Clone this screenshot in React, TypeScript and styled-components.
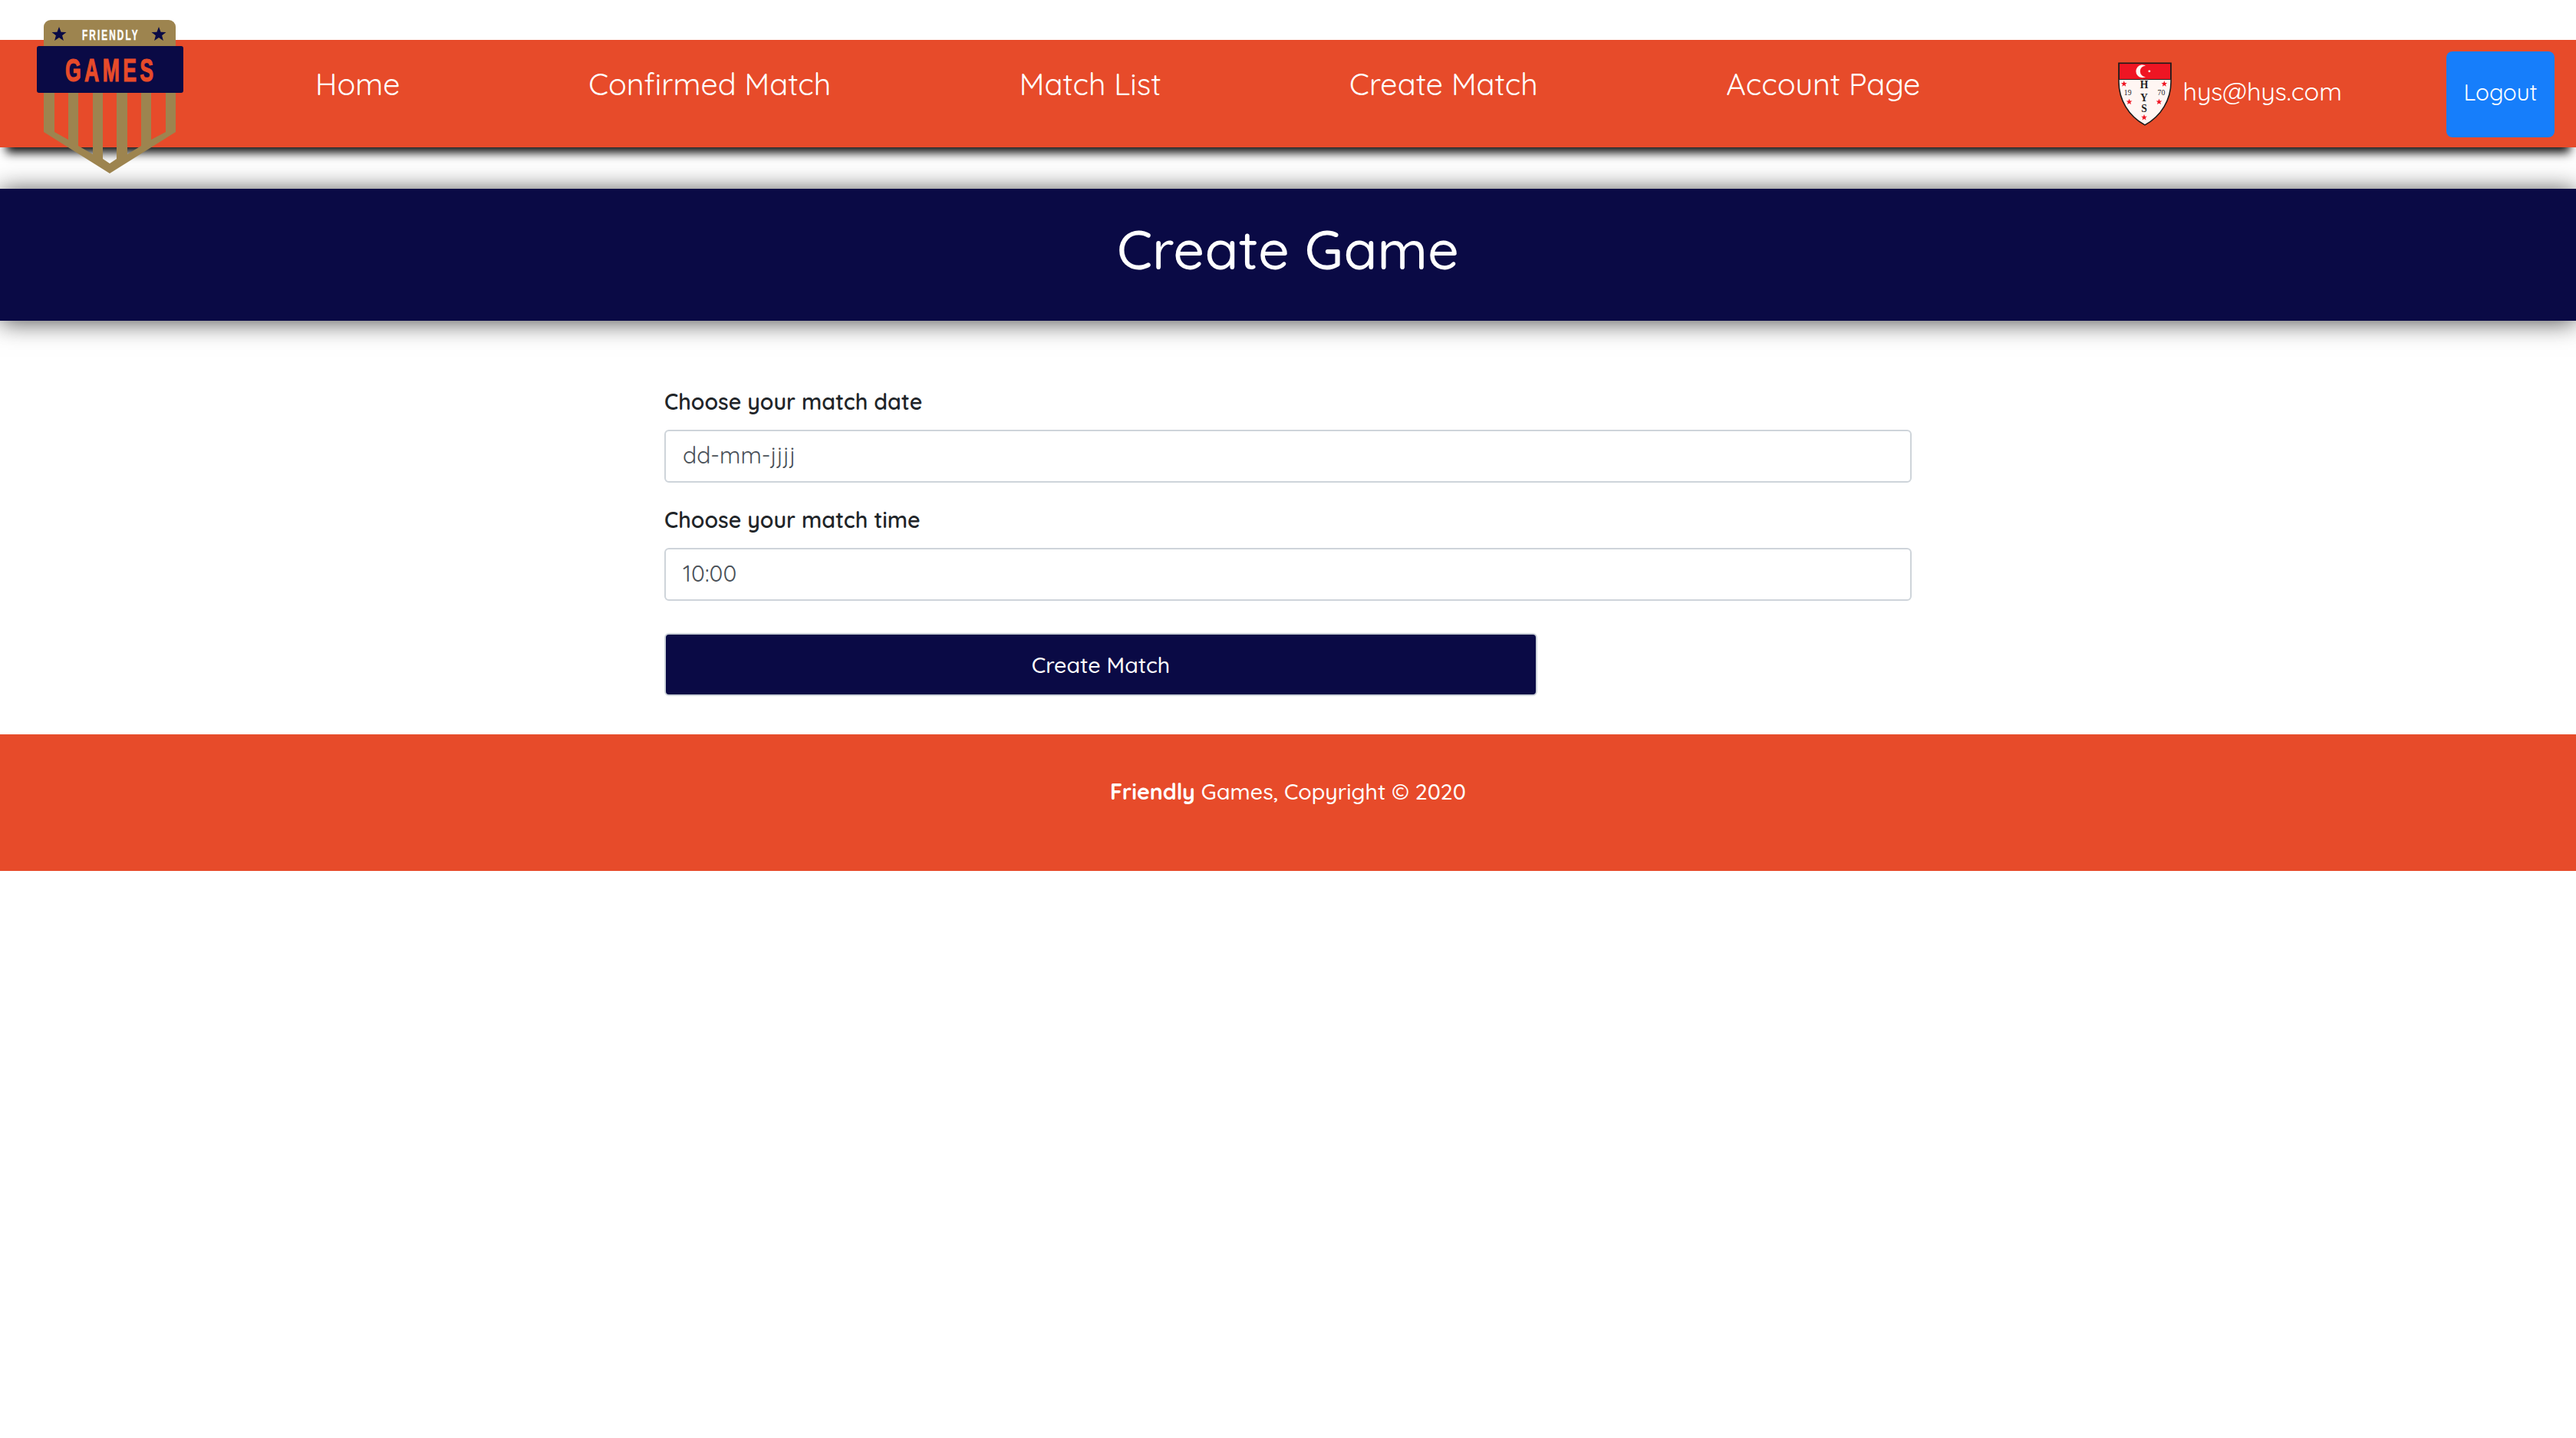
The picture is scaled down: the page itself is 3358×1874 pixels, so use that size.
import styled, { createGlobalStyle } from "styled-components";

const ORANGE = "#e74b2a";
const NAVY = "#0a0a45";
const GOLD = "#9d844f";
const CREST_RED = "#ef1523";

const Global = createGlobalStyle`
  * { box-sizing: border-box; }
  body {
    margin: 0;
    background: #fff;
    font-family: "Quicksand", "Nunito", "Noto Sans", sans-serif;
  }
`;

const Page = styled.div`
  width: 3358px;
  min-height: 1874px;
  padding-top: 52px;
  overflow: hidden;
`;

const NavBar = styled.nav`
  display: flex;
  align-items: center;
  height: 140px;
  padding: 0 28px 0 48px;
  background: ${ORANGE};
  box-shadow: 0 15px 12px -8px rgba(0, 0, 0, 0.95);
  position: relative;
  z-index: 2;
`;

const LogoMark = styled.svg`
  width: 191px;
  height: 200px;
  flex: none;
  margin: -26px 0 -34px;
`;

const NavLinks = styled.div`
  display: flex;
  gap: 245.5px;
  margin: 0 0 26px 172px;
`;

const NavLink = styled.a`
  color: #fff;
  font-size: 39.5px;
  font-weight: 450;
  white-space: nowrap;
`;

const UserBox = styled.div`
  display: flex;
  align-items: center;
  gap: 15px;
  margin-left: auto;
`;

const Crest = styled.svg`
  width: 70px;
  height: 83px;
  flex: none;
`;

const UserMail = styled.span`
  color: #fff;
  font-size: 32.6px;
  font-weight: 450;
  padding-bottom: 8px;
`;

const LogoutButton = styled.button`
  width: 141px;
  height: 112px;
  margin: 2px 0 0 136px;
  padding: 0 0 7px;
  border: 0;
  border-radius: 8px;
  background: #167efb;
  color: #fff;
  font: inherit;
  font-size: 29.6px;
  font-weight: 450;
`;

const Banner = styled.header`
  margin-top: 54px;
  height: 172px;
  padding-top: 34px;
  background: ${NAVY};
  box-shadow: 0 2px 30px rgba(0, 0, 0, 0.7);
  text-align: center;
`;

const BannerTitle = styled.h1`
  margin: 0;
  color: #fff;
  font-size: 71.6px;
  font-weight: 500;
  line-height: 88px;
`;

const MatchForm = styled.form`
  width: 1626px;
  margin: 85px auto 0;
  display: flex;
  flex-direction: column;
`;

const FieldLabel = styled.label`
  display: block;
  margin-bottom: 17px;
  color: #212529;
  font-size: 28.6px;
  font-weight: 600;
  line-height: 40px;
`;

const FieldInput = styled.input`
  display: block;
  width: 100%;
  height: 69px;
  margin-bottom: 28px;
  padding: 0 22px 3px;
  border: 2px solid #ced4da;
  border-radius: 6px;
  background: #fff;
  color: #495057;
  font: inherit;
  font-size: 30px;
`;

const SubmitButton = styled.button`
  width: 1138px;
  height: 82px;
  margin-top: 14px;
  padding: 0;
  border: 2px solid #ced4da;
  border-radius: 6px;
  background: ${NAVY};
  color: #fff;
  font: inherit;
  font-size: 28.6px;
  font-weight: 500;
`;

const Footer = styled.footer`
  margin-top: 50px;
  height: 178px;
  padding-top: 52px;
  background: ${ORANGE};
  color: #fff;
  font-size: 28.6px;
  font-weight: 500;
  line-height: 44px;
  text-align: center;

  strong {
    font-weight: 700;
  }
`;

const STAR = "M0 -10 L2.6 -3.2 L9.5 -3.1 L4.1 1.2 L5.9 8.1 L0 4.1 L-5.9 8.1 L-4.1 1.2 L-9.5 -3.1 L-2.6 -3.2 Z";

function GamesLogo() {
  return (
    <LogoMark viewBox="48 26 191 200">
      <path
        fillRule="evenodd"
        fill={GOLD}
        d="M57 50 H229 V172 L143 226 L57 172 Z M71 121 H89 V182 L71 172 Z M102 121 H121 V201 L102 190 Z M134 121 H152 V207 L143 213 L134 207 Z M166 121 H184 V190 L166 201 Z M197 121 H216 V172 L197 182 Z"
      />
      <rect x="57" y="26" width="172" height="50" rx="9" fill={GOLD} />
      <rect x="48" y="60" width="191" height="61" rx="3" fill={NAVY} />
      <path d={STAR} transform="translate(77 45)" fill={NAVY} />
      <path d={STAR} transform="translate(207 45)" fill={NAVY} />
      <text transform="translate(107 52) scale(0.62 1)" fontFamily="Liberation Sans" fontWeight="700" fontSize="19" letterSpacing="3.4" fill="#fff" stroke="#fff" strokeWidth="0.4">
        FRIENDLY
      </text>
      <text transform="translate(85 106) scale(0.62 1)" fontFamily="Liberation Sans" fontWeight="700" fontSize="43" letterSpacing="7" fill={ORANGE} stroke={ORANGE} strokeWidth="1.2">
        GAMES
      </text>
    </LogoMark>
  );
}

function HysCrest() {
  const stars = [
    [8, 29],
    [62, 29],
    [15, 53],
    [55, 53],
    [35, 74],
  ];
  return (
    <Crest viewBox="0 0 72 85">
      <path d="M1 1 H71 V26 C71 50 58 72 36 84 C14 72 1 50 1 26 Z" fill="#fff6f3" stroke="#1a1a1a" strokeWidth="1.6" />
      <path d="M1.5 1.5 H70.5 V23 H1.5 Z" fill={CREST_RED} stroke="#1a1a1a" strokeWidth="1" />
      <path d="M37 4.6 A8.6 8.6 0 1 0 37 19.4 A7 7 0 1 1 37 4.6 Z" fill="#fff6f3" />
      <circle cx="42" cy="12" r="1.5" fill="#fff6f3" />
      {stars.map(([x, y]) => (
        <path key={`${x}-${y}`} d={STAR} transform={`translate(${x} ${y}) scale(0.42)`} fill={CREST_RED} />
      ))}
      <g fontFamily="Liberation Serif" fill="#222" textAnchor="middle">
        <text x="35" y="35" fontSize="14" fontWeight="700">H</text>
        <text x="35" y="52" fontSize="14" fontWeight="700">Y</text>
        <text x="35" y="67" fontSize="14" fontWeight="700">S</text>
        <text x="13" y="44" fontSize="10">19</text>
        <text x="58" y="44" fontSize="10">70</text>
      </g>
    </Crest>
  );
}

export default function App() {
  return (
    <Page>
      <Global />
      <NavBar>
        <GamesLogo />
        <NavLinks>
          <NavLink>Home</NavLink>
          <NavLink>Confirmed Match</NavLink>
          <NavLink>Match List</NavLink>
          <NavLink>Create Match</NavLink>
          <NavLink>Account Page</NavLink>
        </NavLinks>
        <UserBox>
          <HysCrest />
          <UserMail>hys@hys.com</UserMail>
        </UserBox>
        <LogoutButton type="button">Logout</LogoutButton>
      </NavBar>
      <Banner>
        <BannerTitle>Create Game</BannerTitle>
      </Banner>
      <MatchForm>
        <FieldLabel>Choose your match date</FieldLabel>
        <FieldInput readOnly value="dd-mm-jjjj" />
        <FieldLabel>Choose your match time</FieldLabel>
        <FieldInput readOnly value="10:00" />
        <SubmitButton type="button">Create Match</SubmitButton>
      </MatchForm>
      <Footer>
        <strong>Friendly</strong> Games, Copyright © 2020
      </Footer>
    </Page>
  );
}
